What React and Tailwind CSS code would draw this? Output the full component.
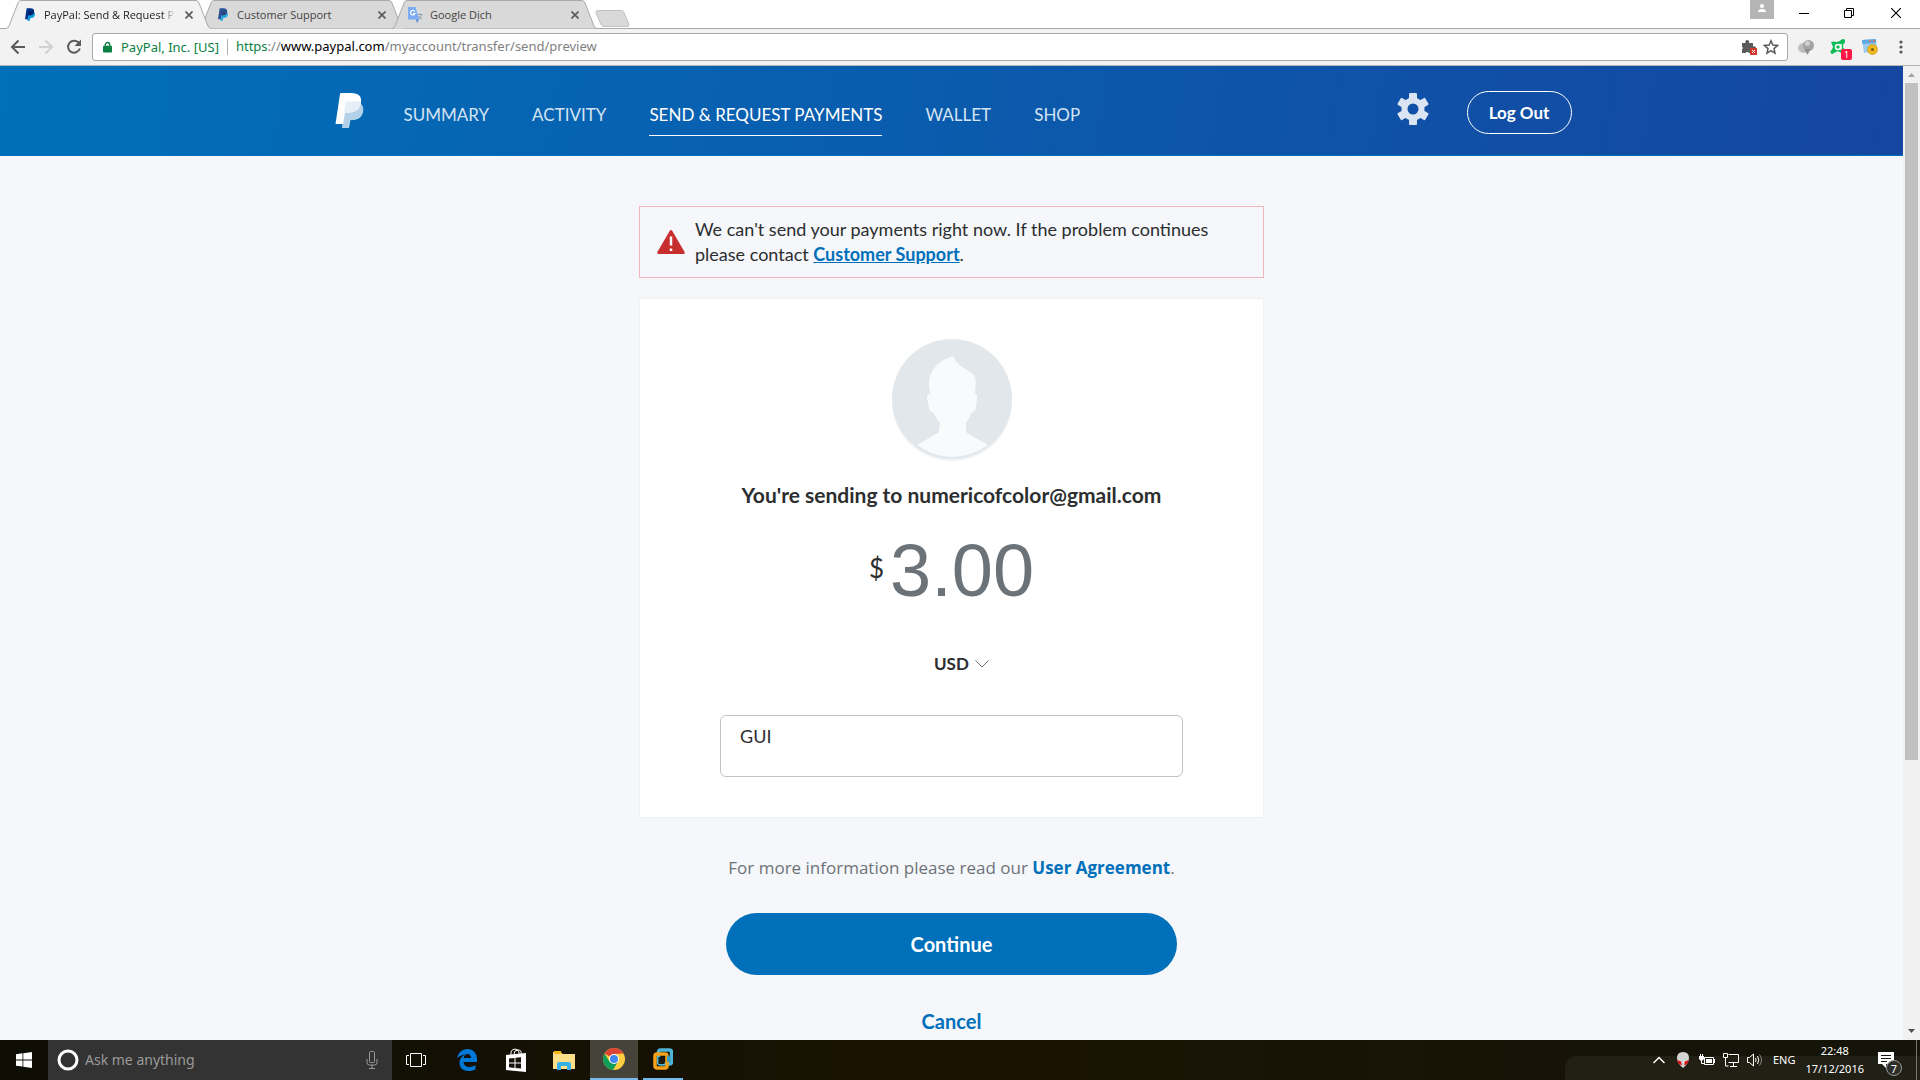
import { useState } from "react";

const uiFont = "font-['Noto_Sans','Open_Sans',sans-serif]";

const PayPalMark = ({ className, back, mid, front }) => (
  <svg viewBox="0 0 28 35" className={className} aria-hidden="true">
    <path d="M9 9h12c5 1 7.600 4.500 6.600 9.500C26.500 25 22 27 17 27h-2l-1.500 8H6.500z" fill={back} />
    <path d="M4.500 1Q4.700 0 5.700 0H16c7 0 10.500 3.500 9.500 9.500C24.500 16 20 19.500 14 19.500H9.500L7.500 31H0z" fill={front} />
    <path d="M10 9.500Q10.200 8.500 11 8.500h14.600C25.300 15.500 20.500 19.500 14 19.500H8.500z" fill={mid} />
  </svg>
);

const TranslateIcon = () => (
  <svg viewBox="0 0 16 16" className="size-4" aria-hidden="true">
    <path d="M7 4h8.500v11.500H10z" fill="#dcdcdc" />
    <path d="M9.500 7.500h5M12 6.500v1M13.500 8c-.5 2-2 3.500-3.500 4M10.500 9c.8 1.500 2 2.500 3.500 3" stroke="#8a9aad" fill="none" />
    <path d="M0 0h7.500l3.500 12.500H1a1 1 0 0 1-1-1z" fill="#7baaf7" />
    <path d="M8 12.500h3L9 16z" fill="#4a7de0" />
    <path d="M6.800 4.500A2.300 2.300 0 1 0 7 6.500H5" stroke="#fff" strokeWidth="1.200" fill="none" />
  </svg>
);

const tabs = [
  { title: "PayPal: Send & Request P", icon: "paypal", active: true },
  { title: "Customer Support", icon: "paypal" },
  { title: "Google Dịch", icon: "translate" },
];

const BrowserTab = ({ tab }) => (
  <div className={`relative h-[29px] w-[205px] -mr-3 ${tab.active ? "z-10" : ""}`}>
    <svg viewBox="0 0 205 29" preserveAspectRatio="none" className="absolute inset-0 size-full" aria-hidden="true">
      <path
        d="M0 28.500Q2 28.500 3 26L12 3Q13 .5 15 .5H190Q192 .5 193 3l9 23q1 2.500 3 2.500"
        fill={tab.active ? "#f2f2f2" : "#d9d9d9"}
        stroke="#a9a9a9"
      />
      {tab.active && <path d="M1 28.500H204" stroke="#f2f2f2" />}
    </svg>
    <div className="relative flex h-full items-center gap-[6px] pr-[14px] pl-4">
      <span className="flex w-4 shrink-0 justify-center">
        {tab.icon === "paypal" ? (
          <PayPalMark
            className={`h-[13px] w-[10px] ${tab.active ? "" : "opacity-80"}`}
            back="#009cde"
            mid="#012169"
            front="#003087"
          />
        ) : (
          <TranslateIcon />
        )}
      </span>
      <span
        className={`min-w-0 flex-1 overflow-hidden font-['Open_Sans',sans-serif] text-[11px] leading-5 whitespace-nowrap ${
          tab.active ? "text-[#222] mask-r-from-90%" : "text-[#444]"
        }`}
      >
        {tab.title}
      </span>
      <button type="button" aria-label={`Close ${tab.title}`} className="shrink-0 p-1">
        <svg viewBox="0 0 8 8" className="size-2" aria-hidden="true">
          <path d="M.5.5l7 7M7.500.5l-7 7" stroke="#5a5a5a" strokeWidth="1.600" />
        </svg>
      </button>
    </div>
  </div>
);

const TabStrip = () => (
  <div className="flex h-[29px] items-start justify-between border-b border-[#a9a9a9] bg-white">
    <div className="flex pl-[6px]">
      {tabs.map((tab) => (
        <BrowserTab key={tab.title} tab={tab} />
      ))}
      <button type="button" aria-label="New tab" className="ml-[10px] pt-[7px]">
        <svg viewBox="0 0 35 17" className="h-[17px] w-[35px]" aria-hidden="true">
          <path d="M3 .5H26q2 0 3 2l5 12q.5 2-2 2H9q-2 0-3-2L1 3Q.5.500 3 .5z" fill="#d9d9d9" stroke="#c2c2c2" />
        </svg>
      </button>
    </div>
    <div className="flex items-start">
      <button type="button" aria-label="Profile" className="mr-[11px] flex h-[19px] w-6 justify-center bg-[#b5b5b5] pt-1">
        <svg viewBox="0 0 10 8" className="h-2 w-[10px]" aria-hidden="true">
          <circle cx="5" cy="2" r="2" fill="#fff" />
          <path d="M1 8q0-3 4-3t4 3z" fill="#fff" />
        </svg>
      </button>
      <button type="button" aria-label="Minimize" className="flex h-[26px] w-[45px] items-center justify-center pr-2">
        <svg viewBox="0 0 10 10" className="size-[10px]" aria-hidden="true">
          <path d="M0 5.500h10" stroke="#000" />
        </svg>
      </button>
      <button type="button" aria-label="Restore" className="flex h-[26px] w-[45px] items-center justify-center pr-2">
        <svg viewBox="0 0 10 10" className="size-[10px]" fill="none" stroke="#000" aria-hidden="true">
          <path d="M.5 2.500h7v7h-7zM2.500 2.500v-2h7v7h-2" />
        </svg>
      </button>
      <button type="button" aria-label="Close" className="flex h-[26px] w-[45px] items-center justify-center pr-1">
        <svg viewBox="0 0 10 10" className="size-[10px]" aria-hidden="true">
          <path d="M0 0l10 10M10 0L0 10" stroke="#000" strokeWidth="1.200" />
        </svg>
      </button>
    </div>
  </div>
);

const Toolbar = () => (
  <div className="flex h-[37px] items-center border-b border-[#b4b4b4] bg-[#f2f2f2] pr-3 pl-[10px]">
    <div className="flex w-[82px] items-center gap-3">
      <button type="button" aria-label="Back">
        <svg viewBox="0 0 16 16" className="size-4" fill="none" stroke="#5a5a5a" strokeWidth="2" aria-hidden="true">
          <path d="M15 8H2.500M8.500 1.500L2 8l6.500 6.500" />
        </svg>
      </button>
      <button type="button" aria-label="Forward">
        <svg viewBox="0 0 16 16" className="size-4" fill="none" stroke="#d0d0d0" strokeWidth="2" aria-hidden="true">
          <path d="M1 8h12.500M7.500 1.500L14 8l-6.500 6.500" />
        </svg>
      </button>
      <button type="button" aria-label="Reload">
        <svg viewBox="0 0 16 16" className="size-4" aria-hidden="true">
          <path d="M13 4.200A6 6 0 1 0 13.800 9.500" fill="none" stroke="#5a5a5a" strokeWidth="2" />
          <path d="M15 .5v6.500H8.500z" fill="#5a5a5a" />
        </svg>
      </button>
    </div>
    <div className="flex h-7 min-w-0 flex-1 items-center rounded-[3px] border border-[#a9a9a9] bg-white px-2 text-[13px]">
      <svg viewBox="0 0 10 12" className="mr-[9px] ml-[2px] h-3 w-[9px]" aria-hidden="true">
        <path d="M2.500 5V3.500a2.500 2.500 0 0 1 5 0V5" fill="none" stroke="#0b8043" strokeWidth="1.500" />
        <rect y="4.500" width="10" height="7.500" rx="1" fill="#0b8043" />
      </svg>
      <span className="border-r border-[#b0b0b0] pr-2 leading-4 text-[#0b8043]">PayPal, Inc. [US]</span>
      <span className="flex-1 pl-2 text-[#808080]">
        <span className="text-[#0b8043]">https</span>://<span className="text-black">www.paypal.com</span>
        /myaccount/transfer/send/preview
      </span>
      <button type="button" aria-label="Plugin blocked" className="mr-[6px]">
        <svg viewBox="0 0 16 16" className="size-4" aria-hidden="true">
          <path d="M1 4h3.500a2 2 0 1 1 3.500 0h4v3.500a2 2 0 1 1 0 3.500v3H8a2 2 0 0 0-3.500 0H1v-3.500a2 2 0 0 0 0-3z" fill="#5a5a5a" />
          <rect x="9" y="9" width="7" height="7" fill="#d33b30" />
          <path d="M11 11l3 3M14 11l-3 3" stroke="#fff" />
        </svg>
      </button>
      <button type="button" aria-label="Bookmark this page">
        <svg viewBox="0 0 16 16" className="size-4" aria-hidden="true">
          <path d="M8 1.800l1.800 4.300 4.700.4-3.500 3.100 1 4.500L8 11.700l-4 2.400 1-4.500L1.500 6.500l4.700-.4z" fill="none" stroke="#5a5a5a" strokeWidth="1.500" />
        </svg>
      </button>
    </div>
    <div className="ml-[10px] flex items-center gap-4">
      <button type="button" aria-label="Globe extension">
        <svg viewBox="0 0 16 16" className="size-4" aria-hidden="true">
          <ellipse cx="6" cy="9" rx="6" ry="5" fill="#bdbdbd" />
          <circle cx="10.500" cy="6.500" r="5.500" fill="#a4a4a4" />
          <circle cx="9.500" cy="4.500" r="2.500" fill="#cfcfcf" />
          <path d="M6.500 10h6l-3 6z" fill="#8d8d8d" />
        </svg>
      </button>
      <button type="button" aria-label="Avast extension" className="relative">
        <svg viewBox="0 0 16 16" className="size-4" aria-hidden="true">
          <path d="M1 3q3-1 5 0 3 0 5-2 3-2 4 .5.500 2-1.500 3.500-1 2 0 4l2 4-4 1-4-2-5 3q-3-.5-1.500-3.500Q2.500 10 3 8z" fill="#0ebd55" />
          <circle cx="8" cy="8" r="2.500" fill="none" stroke="#fff" strokeWidth="1.500" />
          <path d="M11 5v6" stroke="#fff" strokeWidth="1.500" />
        </svg>
        <span className="absolute top-[10px] left-[11px] flex h-[11px] w-[11px] items-center justify-center rounded-xs bg-[#ff1744] text-[9px] leading-none text-white">
          1
        </span>
      </button>
      <button type="button" aria-label="Settings extension">
        <svg viewBox="0 0 16 16" className="size-4" aria-hidden="true">
          <path d="M0 1l14-1 1 12-13 2z" fill="#9ccbf0" />
          <path d="M0 1l14-1v4L.5 5z" fill="#5fa8e2" />
          <path d="M7 1.500h2V3H7zM11 1h2v1.500h-2z" fill="#e56b4d" />
          <circle cx="10.500" cy="10.500" r="5" fill="#f2b91f" stroke="#c8920f" strokeWidth=".6" />
          <circle cx="10.500" cy="10.500" r="1.500" fill="#7a5a10" />
        </svg>
      </button>
      <button type="button" aria-label="Menu" className="px-[5px]">
        <svg viewBox="0 0 4 14" className="h-[14px] w-1" fill="#5a5a5a" aria-hidden="true">
          <circle cx="2" cy="2" r="1.600" />
          <circle cx="2" cy="7" r="1.600" />
          <circle cx="2" cy="12" r="1.600" />
        </svg>
      </button>
    </div>
  </div>
);

const links = ["SUMMARY", "ACTIVITY", "SEND & REQUEST PAYMENTS", "WALLET", "SHOP"];

const SiteHeader = () => (
  <header className="border-b border-[#0070ba] bg-linear-[100deg,#0070ba,#1546a0]">
    <div className="mx-auto flex h-[89px] max-w-[1240px] items-center pl-[3px]">
      <a href="#home" aria-label="PayPal">
        <PayPalMark className="h-[35px] w-[29px]" back="#b3d2ea" mid="#e6eff8" front="#ffffff" />
      </a>
      <nav className="ml-10 flex items-center gap-[43px] pt-[6px] text-[17px]">
        {links.map((link) => (
          <a
            key={link}
            href={`#${link.toLowerCase().replace(/\W+/g, "-")}`}
            className={`border-b pt-[10px] pb-[6px] leading-7 ${
              link.startsWith("SEND") ? "border-white text-white" : "border-transparent text-[#d5e4f3]"
            }`}
          >
            {link}
          </a>
        ))}
      </nav>
      <button type="button" aria-label="Settings" className="mr-[38px] ml-auto pb-1">
        <svg viewBox="-16 -16 32 32" className="size-8" aria-hidden="true">
          <g fill="#dbe4f2">
            <rect x="-4" y="-16" width="8" height="32" rx="1" />
            <rect x="-4" y="-16" width="8" height="32" rx="1" transform="rotate(60)" />
            <rect x="-4" y="-16" width="8" height="32" rx="1" transform="rotate(-60)" />
            <circle r="11.500" />
          </g>
          <circle r="5.500" fill="#1150a8" />
        </svg>
      </button>
      <button
        type="button"
        className="mt-1 h-[43px] w-[105px] rounded-full border border-white text-[17px] font-bold text-white"
      >
        Log Out
      </button>
    </div>
  </header>
);

const ErrorAlert = () => (
  <div role="alert" className="flex items-center gap-[10px] border border-[#f0b8bc] px-[17px] py-[10px]">
    <svg viewBox="0 0 28 24" className="h-6 w-7 shrink-0" aria-hidden="true">
      <path d="M12.800.8q1.200-1.600 2.400 0L27.600 22q.6 2-1.200 2H1.600q-1.800 0-1.200-2z" fill="#c72e2e" />
      <path d="M14 6.500v9M14 18.500v2.500" stroke="#fff" strokeWidth="2.500" />
    </svg>
    <p className="text-lg leading-[25px] text-[#2c2e2f]">
      We can't send your payments right now. If the problem continues please contact{" "}
      <a href="#support" className="font-bold text-[#0070ba] underline">
        Customer Support
      </a>
      .
    </p>
  </div>
);

const Avatar = () => (
  <svg viewBox="0 0 120 122" className="h-[122px] w-[120px]" role="img" aria-label="Recipient">
    <circle cx="60" cy="62" r="60" fill="#f0f2f4" />
    <circle cx="60" cy="60" r="60" fill="#e1e7eb" />
    <path
      d="M61 17Q65 26 75 31 84 35 84 43L83 55q3 0 2 4l-1 10q0 3-4 4-3 7-6 11v7q0 3 3 4l19 11Q79 118 60 118T25 106l19-11q3-1 3-4l1-7q-4-4-7-11-3 0-4-4l-2-10q0-4 3-4l-1-10Q37 25 61 17z"
      fill="#f9fafc"
    />
  </svg>
);

const SendPreview = () => {
  const [note, setNote] = useState("GUI");
  const [currency, setCurrency] = useState("USD");

  return (
    <div className="mx-auto flex w-full max-w-[625px] flex-col pt-[50px]">
      <ErrorAlert />
      <section className="mt-5 flex flex-col items-center border border-[#f0f1f3] bg-white px-20 py-10">
        <Avatar />
        <h1 className="mt-5 text-[21px] leading-7 font-bold text-[#2c2e2f]">
          You're sending to numericofcolor@gmail.com
        </h1>
        <div className="mt-5 flex items-center gap-[6px]">
          <span className="pb-[6px] text-[26px] text-[#2c2e2f]">$</span>
          <span className="font-['Liberation_Sans',sans-serif] text-[74px] leading-[84px] text-[#6c7378]">3.00</span>
        </div>
        <label className="mt-[39px] ml-5 flex items-center gap-[6px] text-[17px] text-[#2c2e2f]">
          <span className="sr-only">Currency</span>
          <select
            value={currency}
            onChange={(e) => setCurrency(e.target.value)}
            className="appearance-none bg-transparent leading-6 font-bold"
          >
            <option>USD</option>
          </select>
          <svg viewBox="0 0 14 8" className="h-2 w-[14px]" aria-hidden="true">
            <path d="M.5.5L7 7 13.500.5" fill="none" stroke="#6c7378" />
          </svg>
        </label>
        <textarea
          aria-label="Note"
          value={note}
          onChange={(e) => setNote(e.target.value)}
          className="mt-[39px] h-[62px] w-full resize-none rounded-md border border-[#c0c3c5] px-[19px] py-[6px] text-lg text-[#2c2e2f]"
        />
      </section>
      <p className="mt-[38px] text-center font-['Open_Sans',sans-serif] text-[17px] leading-6 text-[#6c7378]">
        For more information please read our{" "}
        <a href="#agreement" className="font-bold text-[#0070ba]">
          User Agreement
        </a>
        .
      </p>
      <button
        type="button"
        className="mx-[87px] mt-[33px] h-[62px] rounded-full bg-[#0070ba] text-xl font-bold text-white"
      >
        Continue
      </button>
      <a href="#cancel" className="mt-8 self-center text-xl font-bold text-[#0070ba]">
        Cancel
      </a>
    </div>
  );
};

const Scrollbar = () => (
  <div className="flex w-[17px] shrink-0 flex-col items-center bg-[#f1f1f1]">
    <svg viewBox="0 0 17 17" className="size-[17px]" aria-hidden="true">
      <path d="M5 11l3.500-4 3.500 4z" fill="#a3a3a3" />
    </svg>
    <div className="flex w-[13px] flex-1 flex-col">
      <div className="h-[72%] bg-[#c1c1c1]" />
    </div>
    <svg viewBox="0 0 17 17" className="size-[17px]" aria-hidden="true">
      <path d="M5 6l3.500 4L12 6z" fill="#505050" />
    </svg>
  </div>
);

const Taskbar = () => (
  <footer className="relative flex h-10 shrink-0 items-stretch bg-linear-to-r from-[#0d0d04] via-[#1a1302] to-[#14140a] text-white">
    <div className="absolute right-0 bottom-0 h-6 w-[355px] rounded-tl-xl bg-white/5" />
    <button type="button" aria-label="Start" className="flex w-12 items-center justify-center">
      <svg viewBox="0 0 16 16" className="size-4" fill="#fff" aria-hidden="true">
        <path d="M0 2.300l6.500-1v6.200H0zM7.300 1.200L16 0v7.500H7.300zM0 8.400h6.500v6.200L0 13.700zM7.300 8.400H16V16l-8.700-1.200z" />
      </svg>
    </button>
    <div className="flex w-[344px] items-center gap-[6px] bg-[#333333] pr-[14px] pl-[9px]">
      <svg viewBox="0 0 22 22" className="size-[22px] shrink-0" aria-hidden="true">
        <circle cx="11" cy="11" r="9" fill="none" stroke="#fff" strokeWidth="3" />
      </svg>
      <input
        type="text"
        aria-label="Search"
        placeholder="Ask me anything"
        className="min-w-0 flex-1 bg-transparent text-sm placeholder:text-[#9a9a9a]"
      />
      <svg viewBox="0 0 12 18" className="h-[18px] w-3" fill="none" stroke="#999" aria-hidden="true">
        <rect x="3.500" y=".5" width="5" height="11" rx="1" />
        <path d="M1 8v3.500q0 2.500 2.500 2.500h5Q11 14 11 11.500V8M6 14v3.500M3 17.500h6" />
      </svg>
    </div>
    <button type="button" aria-label="Task View" className="flex w-12 items-center justify-center">
      <svg viewBox="0 0 20 16" className="h-4 w-5" fill="none" stroke="#fff" aria-hidden="true">
        <path d="M4.500 1.500h11v13h-11zM3 3.500H.5v9H3M17 3.500h2.500v9H17" />
      </svg>
    </button>
    <button type="button" aria-label="Edge" className="flex w-[54px] items-center justify-center">
      <svg viewBox="0 0 20 22" className="h-[22px] w-5" aria-hidden="true">
        <path d="M0 9.500C1 4 5 0 10.500 0 16.500 0 20 4.500 20 10v3H6.500c.5 6 7.500 6 12 3v4.500C11 24 2.500 21.500 2.500 14 2.500 10 5 7 8 5.500 4.500 6 1.500 7.500 0 9.500zM6.700 9H14c0-5.500-7-5-7.300 0z" fill="#0078d7" />
      </svg>
    </button>
    <button type="button" aria-label="Store" className="flex w-11 items-center justify-center">
      <svg viewBox="0 0 20 24" className="h-6 w-5" aria-hidden="true">
        <path d="M5 8V4q1-3 4-3t4 3v3M8 6q0-4 4-4t3 4" fill="none" stroke="#fff" />
        <path d="M0 7l20-2v19L0 22z" fill="#fff" />
        <path d="M3 10.500l5.500-.6v4.600H3zM9.500 9.800l5.500-.6v5.300H9.500zM3 15.500h5.500v4.400L3 19.300zM9.500 15.500H15v5.100l-5.500-.6z" fill="#15130a" />
      </svg>
    </button>
    <button type="button" aria-label="File Explorer" className="flex w-[52px] items-center justify-center">
      <svg viewBox="0 0 22 19" className="h-[19px] w-[22px]" aria-hidden="true">
        <path d="M0 1h8l1.500 2H22v15H0z" fill="#ffe08a" />
        <path d="M1 0h7v3H1z" fill="#f5b916" />
        <path d="M4 19v-6q0-2 2-2h10q2 0 2 2v6h-4v-4H8v4z" fill="#35b1e8" />
      </svg>
    </button>
    <button type="button" aria-label="Chrome" className="flex w-12 items-center justify-center border-b-2 border-[#76b9ed] bg-[#44443a]">
      <svg viewBox="0 0 22 22" className="size-[22px]" aria-hidden="true">
        <circle cx="11" cy="11" r="11" fill="#ffcd40" />
        <path d="M11 11L1.500 5.500A11 11 0 0 1 20.500 5.500L11 6z" fill="#db4437" />
        <path d="M1.500 5.500A11 11 0 0 0 10 22l5-8.500-8.500 0z" fill="#0f9d58" />
        <circle cx="11" cy="11" r="5" fill="#fff" />
        <circle cx="11" cy="11" r="4" fill="#4285f4" />
      </svg>
    </button>
    <button type="button" aria-label="VMware" className="ml-[5px] flex w-10 items-center justify-center border-b-2 border-[#76b9ed]">
      <svg viewBox="0 0 20 22" className="h-[22px] w-5" fill="none" aria-hidden="true">
        <rect x="5.500" y="2" width="13" height="14" rx="2" stroke="#4fb4d8" strokeWidth="3.500" />
        <rect x="2" y="6" width="12" height="14" rx="2" stroke="#f7a11a" strokeWidth="3.500" />
        <path d="M14 7v7h4V9z" fill="#3a9fc4" />
        <path d="M5.500 9h6v7h-6z" fill="#1a1a10" />
      </svg>
    </button>
    <div className="relative ml-auto flex items-center text-xs">
      <svg viewBox="0 0 12 8" className="mr-3 h-2 w-3" aria-hidden="true">
        <path d="M.5 7L6 1.500 11.500 7" fill="none" stroke="#fff" strokeWidth="1.500" />
      </svg>
      <svg viewBox="0 0 12 16" className="mr-[10px] h-4 w-3" aria-hidden="true">
        <path d="M6 0q6 0 6 6 0 5-6 10Q0 11 0 6q0-6 6-6z" fill="#d4d4d4" />
        <path d="M0 8l4 1.500 1 4Q1 12 0 8zM12 8L8 9.500l-1 4q4-1.500 5-5.500z" fill="#e01010" />
      </svg>
      <svg viewBox="0 0 16 12" className="mr-2 h-3 w-4" aria-hidden="true">
        <path d="M5.500 3.500h9v7h-9z" fill="none" stroke="#fff" />
        <path d="M7 5h6v4H7zM15 5h1v4h-1zM0 2h5v3L3.500 6.500h-2L0 5zM1 0h1v2H1zM3 0h1v2H3z" fill="#fff" />
        <path d="M2.500 6v3.500h3" fill="none" stroke="#fff" />
      </svg>
      <svg viewBox="0 0 16 14" className="mr-2 h-[14px] w-4" fill="none" stroke="#fff" aria-hidden="true">
        <path d="M5.500 1.500h10v8h-10M10.500 10v3M7 13.500h7M.5.500h4v4h-4zM2.500 5v8h3" />
      </svg>
      <svg viewBox="0 0 16 14" className="mr-[10px] h-[14px] w-4" fill="none" stroke="#fff" aria-hidden="true">
        <path d="M.5 4.500h2l4-3.500v12l-4-3.500h-2zM8.500 5q1 2 0 4M10.500 3q2.500 4 0 8" />
        <path d="M12.500 1.500q4 5.500 0 11" stroke="#888" />
      </svg>
      <span className="mr-[10px] text-[11px]">ENG</span>
      <div className="mr-[14px] text-center text-[11px] leading-[18px]">
        <div>22:48</div>
        <div>17/12/2016</div>
      </div>
      <button type="button" aria-label="Notifications" className="relative mr-[22px]">
        <svg viewBox="0 0 16 16" className="size-4" aria-hidden="true">
          <path d="M0 0h16v12H8v4l-4-4H0z" fill="#fff" />
          <path d="M3 3.500h10M3 6.500h10M3 9.500h6" stroke="#15130a" />
        </svg>
        <span className="absolute top-2 left-2 flex size-4 items-center justify-center rounded-full border border-[#999] bg-[#2d2d2a] text-[11px] leading-none">
          7
        </span>
      </button>
      <div className="h-full w-1 border-l border-[#77776f]" />
    </div>
  </footer>
);

export default function App() {
  return (
    <div className={`flex h-screen flex-col ${uiFont}`}>
      <TabStrip />
      <Toolbar />
      <div className="flex min-h-0 flex-1">
        <main className="flex-1 overflow-hidden bg-[#f5f7fa] font-['Lato','Open_Sans',sans-serif]">
          <SiteHeader />
          <SendPreview />
        </main>
        <Scrollbar />
      </div>
      <Taskbar />
    </div>
  );
}
